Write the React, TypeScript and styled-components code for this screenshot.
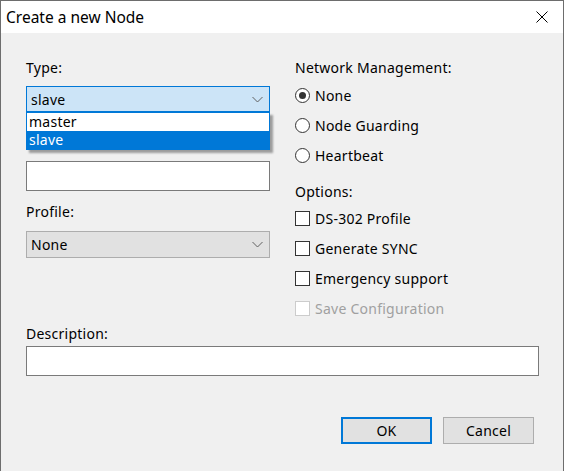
import React from 'react';
import styled, { createGlobalStyle } from 'styled-components';

const Global = createGlobalStyle`
  html, body { margin: 0; padding: 0; background: #f0f0f0; }
  body { font-family: "Noto Sans", "Open Sans", sans-serif; }
`;

const Window = styled.div`
  width: 564px;
  height: 471px;
  box-sizing: border-box;
  border: 1px solid #6d6d6d;
  border-bottom: none;
  background: #f0f0f0;
  display: flex;
  flex-direction: column;
  font-family: "Noto Sans", "Open Sans", sans-serif;
  font-size: 14px;
  letter-spacing: 0.25px;
  color: #000;
  overflow: hidden;
`;

const TitleBar = styled.div`
  height: 32px;
  flex: none;
  background: #fff;
  display: flex;
  align-items: center;
  justify-content: space-between;
  padding-left: 5px;
`;

const Title = styled.span`
  font-size: 15.5px;
  letter-spacing: 0;
  line-height: 20px;
  color: #000;
`;

const CloseButton = styled.button`
  width: 42px;
  height: 32px;
  border: 0;
  padding: 0;
  background: transparent;
  display: flex;
  align-items: center;
  justify-content: center;
`;

const Body = styled.div`
  flex: 1;
  display: flex;
  flex-direction: column;
  padding: 26px 24px 0 25px;
`;

const Columns = styled.div`
  display: grid;
  grid-template-columns: 244px 1fr;
  column-gap: 25px;
  align-items: start;
`;

const Column = styled.div`
  display: flex;
  flex-direction: column;
`;

const Label = styled.div<{ $gap?: number }>`
  height: 18px;
  line-height: 18px;
  margin-top: ${(p) => p.$gap ?? 0}px;
  white-space: nowrap;
`;

const ComboWrap = styled.div<{ $gap: number }>`
  position: relative;
  margin-top: ${(p) => p.$gap}px;
`;

const Combo = styled.div<{ $open?: boolean; $h: number }>`
  box-sizing: border-box;
  height: ${(p) => p.$h}px;
  border: 1px solid ${(p) => (p.$open ? '#0078d7' : '#adadad')};
  background: ${(p) => (p.$open ? '#cce4f7' : '#e1e1e1')};
  display: flex;
  align-items: center;
  justify-content: space-between;
  padding: 0 6px 0 4px;
`;

const DropList = styled.div`
  position: absolute;
  top: 100%;
  left: 0;
  right: 0;
  background: #fff;
  border: 1px solid #0078d7;
  box-shadow: 3px 3px 2px rgba(0, 0, 0, 0.35);
  z-index: 2;
`;

const DropItem = styled.div<{ $selected?: boolean }>`
  height: 18px;
  line-height: 18px;
  padding-left: 2px;
  background: ${(p) => (p.$selected ? '#0078d7' : '#fff')};
  color: ${(p) => (p.$selected ? '#fff' : '#000')};
`;

const TextBox = styled.div<{ $gap: number }>`
  box-sizing: border-box;
  height: 30px;
  margin-top: ${(p) => p.$gap}px;
  background: #fff;
  border: 1px solid #7a7a7a;
`;

const Group = styled.div<{ $gap: number }>`
  display: flex;
  flex-direction: column;
  margin-top: ${(p) => p.$gap}px;
`;

const OptionRow = styled.div<{ $disabled?: boolean }>`
  height: 30px;
  display: flex;
  align-items: center;
  gap: 5px;
  color: ${(p) => (p.$disabled ? '#a0a0a0' : '#000')};
  white-space: nowrap;
`;

const RadioMark = styled.span<{ $checked?: boolean }>`
  box-sizing: border-box;
  width: 15px;
  height: 15px;
  border-radius: 50%;
  border: 1px solid #333;
  background: #fff;
  display: flex;
  align-items: center;
  justify-content: center;
  &::after {
    content: '';
    display: ${(p) => (p.$checked ? 'block' : 'none')};
    width: 7px;
    height: 7px;
    border-radius: 50%;
    background: #333;
  }
`;

const CheckMark = styled.span<{ $disabled?: boolean }>`
  box-sizing: border-box;
  width: 15px;
  height: 15px;
  border: 1px solid ${(p) => (p.$disabled ? '#cccccc' : '#333')};
  background: #fff;
`;

const ButtonRow = styled.div`
  display: flex;
  justify-content: flex-end;
  gap: 11px;
  margin-top: 41px;
  padding-right: 5px;
`;

const DialogButton = styled.button<{ $default?: boolean }>`
  box-sizing: border-box;
  width: 91px;
  height: 27px;
  padding: 0;
  background: #e1e1e1;
  border: ${(p) => (p.$default ? '2px solid #0078d7' : '1px solid #adadad')};
  font-family: inherit;
  font-size: 14px;
  letter-spacing: 0.25px;
  color: #000;
`;

const Chevron = () => (
  <svg width="11" height="7" viewBox="0 0 11 7">
    <path d="M0.5 1 L5.5 6 L10.5 1" fill="none" stroke="#606060" strokeWidth="1" />
  </svg>
);

const CloseIcon = () => (
  <svg width="12" height="12" viewBox="0 0 12 12">
    <path d="M0.5 0.5 L11.5 11.5 M11.5 0.5 L0.5 11.5" stroke="#000" strokeWidth="1" />
  </svg>
);

export default function App() {
  return (
    <>
      <Global />
      <Window>
        <TitleBar>
          <Title>Create a new Node</Title>
          <CloseButton aria-label="Close">
            <CloseIcon />
          </CloseButton>
        </TitleBar>
        <Body>
          <Columns>
            <Column>
              <Label>Type:</Label>
              <ComboWrap $gap={9}>
                <Combo $open $h={26}>
                  <span>slave</span>
                  <Chevron />
                </Combo>
                <DropList>
                  <DropItem>master</DropItem>
                  <DropItem $selected>slave</DropItem>
                </DropList>
              </ComboWrap>
              <TextBox $gap={49} />
              <Label $gap={12}>Profile:</Label>
              <ComboWrap $gap={10}>
                <Combo $h={27}>
                  <span>None</span>
                  <Chevron />
                </Combo>
              </ComboWrap>
            </Column>
            <Column>
              <Label>Network Management:</Label>
              <Group $gap={3}>
                <OptionRow>
                  <RadioMark $checked />
                  None
                </OptionRow>
                <OptionRow>
                  <RadioMark />
                  Node Guarding
                </OptionRow>
                <OptionRow>
                  <RadioMark />
                  Heartbeat
                </OptionRow>
              </Group>
              <Label $gap={13}>Options:</Label>
              <Group $gap={2}>
                <OptionRow>
                  <CheckMark />
                  DS-302 Profile
                </OptionRow>
                <OptionRow>
                  <CheckMark />
                  Generate SYNC
                </OptionRow>
                <OptionRow>
                  <CheckMark />
                  Emergency support
                </OptionRow>
                <OptionRow $disabled>
                  <CheckMark $disabled />
                  Save Configuration
                </OptionRow>
              </Group>
            </Column>
          </Columns>
          <Label $gap={2}>Description:</Label>
          <TextBox $gap={3} />
          <ButtonRow>
            <DialogButton $default>OK</DialogButton>
            <DialogButton>Cancel</DialogButton>
          </ButtonRow>
        </Body>
      </Window>
    </>
  );
}
